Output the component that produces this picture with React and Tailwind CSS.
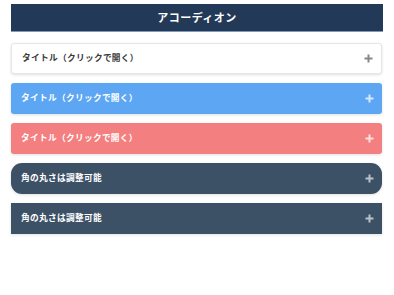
import React from 'react';

const items = [
  { label: 'タイトル（クリックで開く）', box: 'bg-white border border-[#e6e6e6] rounded-[3px] text-[#3a3a3a]', plus: 'text-[#888]' },
  { label: 'タイトル（クリックで開く）', box: 'bg-[#5ca6f3] rounded-[3px] text-white', plus: 'text-white/75' },
  { label: 'タイトル（クリックで開く）', box: 'bg-[#f47f80] rounded-[3px] text-white', plus: 'text-white/75' },
  { label: '角の丸さは調整可能', box: 'bg-[#3c5066] rounded-[11px] text-white', plus: 'text-white/65' },
  { label: '角の丸さは調整可能', box: 'bg-[#3c5066] text-white', plus: 'text-white/65' },
];

const Plus = ({ className }) => (
  <svg width="9" height="9" viewBox="0 0 9 9" className={className}>
    <path d="M4.5 0.5v8M0.5 4.5h8" stroke="currentColor" strokeWidth="2" />
  </svg>
);

const App = () => {
  return (
    <div
      className="w-[394px] h-[295px] bg-white pt-[4px] px-[11px]"
      style={{ fontFamily: '"Noto Sans CJK JP", "Noto Sans", sans-serif' }}
    >
      {/* Header */}
      <div className="h-[28px] bg-[#223a58] border-b border-[#7f9ab8] flex items-center justify-center">
        <span className="text-white text-[11px] font-bold tracking-[0.04em]">アコーディオン</span>
      </div>

      {/* Accordion list */}
      <div className="mt-[11px] flex flex-col gap-[9px] w-[371px]">
        {items.map((item, i) => (
          <div
            key={i}
            className={`h-[31px] flex items-center justify-between pl-[10px] pr-[8px] shadow-[0_1px_3px_rgba(0,0,0,0.12)] ${item.box}`}
          >
            <span className="text-[8.7px] font-bold tracking-[0.3px] -mt-px">{item.label}</span>
            <Plus className={item.plus} />
          </div>
        ))}
      </div>
    </div>
  );
};

export default App;
